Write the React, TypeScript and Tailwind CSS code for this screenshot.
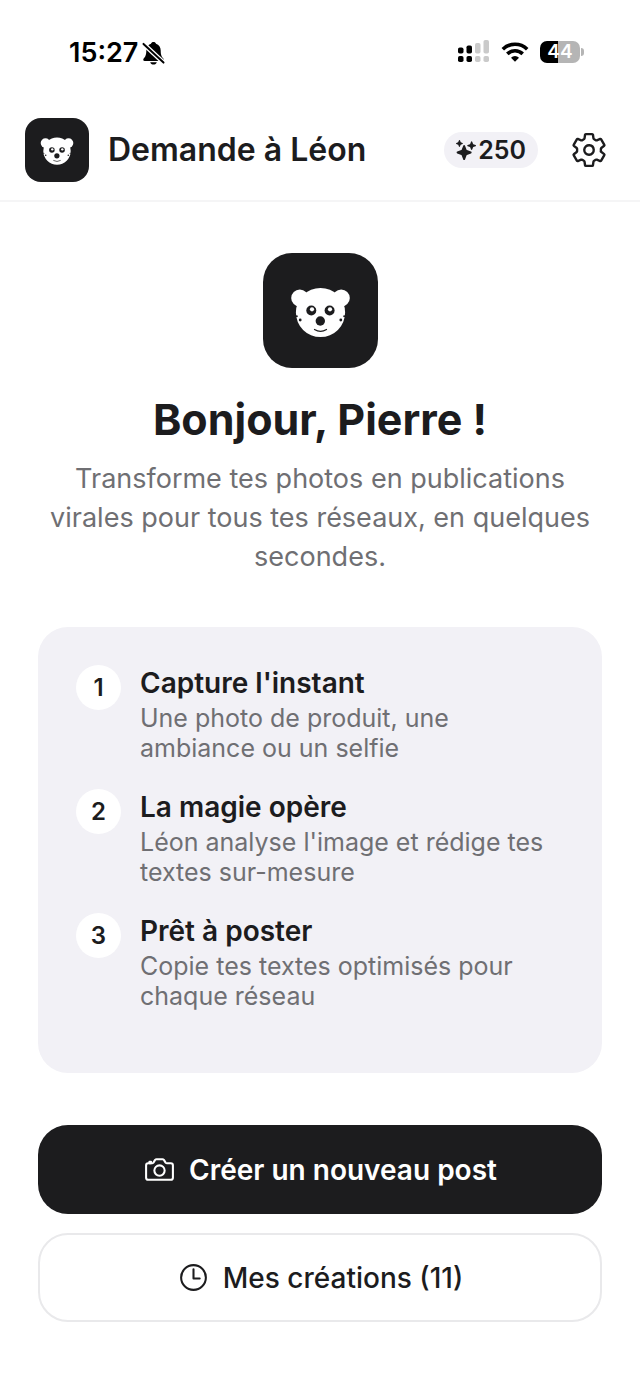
import type { ReactNode } from 'react'
import { IoCameraOutline, IoSettingsOutline, IoSparkles, IoTimeOutline } from 'react-icons/io5'

const STEPS = [
  { title: "Capture l'instant", description: 'Une photo de produit, une ambiance ou un selfie' },
  { title: 'La magie opère', description: "Léon analyse l'image et rédige tes textes sur-mesure" },
  { title: 'Prêt à poster', description: 'Copie tes textes optimisés pour chaque réseau' },
]

const CREATION_COUNT = 11

const BearFace = ({ className }: { className: string }) => (
  <svg aria-hidden="true" className={className} viewBox="0 0 115 115">
    <g fill="#fff">
      <circle cx="36.8" cy="45" r="8.6" />
      <circle cx="78.2" cy="45" r="8.6" />
      <circle cx="57.5" cy="59.5" r="24.6" />
    </g>
    <g fill="#1c1c1e">
      <circle cx="48.3" cy="57.5" r="5" />
      <circle cx="66.6" cy="57.5" r="5" />
      <circle cx="57.3" cy="68" r="4.7" />
      <circle cx="37.2" cy="67" r="1.4" />
      <circle cx="77.8" cy="67" r="1.4" />
      <circle cx="33.8" cy="63.3" r="1" />
      <circle cx="81.2" cy="63.3" r="1" />
    </g>
    <g fill="#fff">
      <circle cx="49" cy="56.3" r="2.1" />
      <circle cx="67" cy="56.3" r="2.1" />
    </g>
    <path d="M51.5 76.5q6 3.6 12 0" fill="none" stroke="#1c1c1e" strokeLinecap="round" strokeWidth="1.2" />
  </svg>
)

const BellOffIcon = () => (
  <svg aria-hidden="true" className="size-6" viewBox="0 0 24 24">
    <path d="M11.5 1c-1.2 0-2.2.7-2.5 1.700C6 3.700 4.300 6.300 4.300 9.500c0 4.500-1 6.300-2.600 8-.9 1.100-.4 2.500 1 2.500h17.600c1.400 0 1.900-1.400 1-2.500-1.600-1.700-2.600-3.500-2.600-8 0-3.200-1.700-5.800-4.700-6.800-.3-1-1.300-1.700-2.500-1.700z" />
    <path d="M8.200 21.200h6.600c-.4 1.500-1.700 2.400-3.300 2.400s-2.900-.9-3.300-2.400z" />
    <path d="M0 1.500l22.500 21" stroke="#fff" strokeWidth="4.600" />
    <path d="M1.500 2.900l20 18.700" stroke="#000" strokeLinecap="round" strokeWidth="2" />
  </svg>
)

const SignalIcon = () => (
  <svg aria-hidden="true" className="h-6 w-8" viewBox="0 0 32 24">
    <rect height="6" rx="1.8" width="5.5" x="0" y="7.5" />
    <rect height="6" rx="1.8" width="5.5" x="0" y="16" />
    <rect height="8" rx="1.8" width="5.5" x="8.5" y="5.5" />
    <rect height="6" rx="1.8" width="5.5" x="8.5" y="16" />
    <g fill="#cacaca">
      <rect height="10.5" rx="1.8" width="5.5" x="17" y="3" />
      <rect height="6" rx="1.8" width="5.5" x="17" y="16" />
      <rect height="13.5" rx="1.8" width="5.5" x="25.5" y="0" />
      <rect height="6" rx="1.8" width="5.5" x="25.5" y="16" />
    </g>
  </svg>
)

const WifiIcon = () => (
  <svg aria-hidden="true" className="h-5 w-7" viewBox="0 0 28 20">
    <g fill="none" stroke="#000" strokeWidth="3.6">
      <path d="M1.8 7.2a17.5 17.5 0 0 1 24.4 0" />
      <path d="M6.3 11.9a11 11 0 0 1 15.4 0" />
    </g>
    <path d="M14 19.8l-4-4.1a5.700 5.700 0 0 1 8 0z" />
  </svg>
)

const StatusBar = () => (
  <div className="flex h-[100px] items-center justify-between pr-14 pl-[69px] text-black">
    <div className="flex items-center gap-1 pt-[5px]">
      <span className="text-[27px] leading-8 font-semibold">15:27</span>
      <BellOffIcon />
    </div>
    <div className="flex items-center gap-[11px] pt-1">
      <SignalIcon />
      <WifiIcon />
      <div className="flex items-center gap-px">
        <span className="flex h-[22px] w-10 items-center justify-center rounded-[7px] bg-linear-to-r from-black from-45% to-[#b5b5b5] to-45% text-[19px] leading-[22px] font-semibold text-white">
          44
        </span>
        <span className="h-2 w-[3px] rounded-r-full bg-[#b5b5b5]" />
      </div>
    </div>
  </div>
)

const Header = () => (
  <header className="flex items-center border-b-2 border-[#f5f5f6] pt-[18px] pr-8 pb-[18px] pl-[25px]">
    <span className="flex size-16 items-center justify-center rounded-2xl bg-[#1c1c1e]">
      <BearFace className="size-16" />
    </span>
    <h2 className="ml-[19px] grow text-[32px] leading-10 font-semibold">Demande à Léon</h2>
    <span className="flex h-9 items-center gap-0.5 rounded-full bg-[#f2f1f6] px-3 text-[25px] leading-9 font-semibold">
      <IoSparkles aria-hidden="true" className="size-5" />
      250
    </span>
    <button aria-label="Réglages" className="ml-8 cursor-pointer" type="button">
      <IoSettingsOutline aria-hidden="true" className="size-[38px]" />
    </button>
  </header>
)

const Step = ({ index, title, description }: { index: number; title: string; description: string }) => (
  <li className="flex gap-[19px]">
    <span className="flex size-[45px] shrink-0 items-center justify-center rounded-full bg-white text-[24px] font-semibold">
      {index}
    </span>
    <div className="min-w-0">
      <h3 className="text-[28px] leading-9 font-semibold">{title}</h3>
      <p className="mt-0.5 text-[25px] leading-[30px] text-[#6f6f73]">{description}</p>
    </div>
  </li>
)

const ActionButton = ({ children, className }: { children: ReactNode; className: string }) => (
  <button
    className={`flex h-[89px] w-full cursor-pointer items-center justify-center gap-[13px] rounded-[30px] text-[28px] ${className}`}
    type="button"
  >
    {children}
  </button>
)

export default function App() {
  return (
    <div className="min-h-screen bg-white font-['Inter',sans-serif] text-[#1c1c1e]">
      <StatusBar />
      <Header />
      <main className="px-[38px] pt-[51px] pb-[69px]">
        <section className="flex flex-col items-center text-center">
          <span className="flex size-[115px] items-center justify-center rounded-[29px] bg-[#1c1c1e]">
            <BearFace className="size-[115px]" />
          </span>
          <h1 className="mt-[23px] text-[43px] leading-[56px] font-bold">Bonjour, Pierre !</h1>
          <p className="mt-3 text-[27px] leading-[39px] text-[#6f6f73]">
            Transforme tes photos en publications virales pour tous tes réseaux, en quelques secondes.
          </p>
        </section>

        <ol className="mt-[51px] flex flex-col gap-[26px] rounded-[30px] bg-[#f2f1f6] px-[38px] pt-[38px] pb-[62px]">
          {STEPS.map((step, i) => (
            <Step key={step.title} description={step.description} index={i + 1} title={step.title} />
          ))}
        </ol>

        <div className="mt-[52px] flex flex-col gap-[19px]">
          <ActionButton className="bg-[#1c1c1e] font-semibold text-white">
            <IoCameraOutline aria-hidden="true" className="size-[33px]" />
            Créer un nouveau post
          </ActionButton>
          <ActionButton className="border-2 border-[#e9e9eb] font-medium">
            <IoTimeOutline aria-hidden="true" className="size-[33px]" />
            Mes créations ({CREATION_COUNT})
          </ActionButton>
        </div>
      </main>
    </div>
  )
}
